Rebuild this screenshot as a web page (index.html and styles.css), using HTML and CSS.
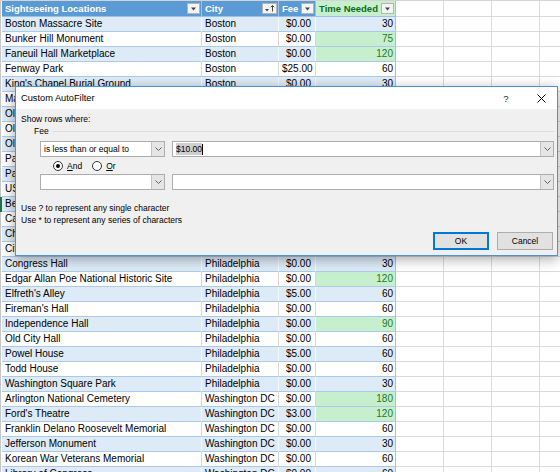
FILE: index.html
```html
<!DOCTYPE html>
<html lang="en">
<head>
    <meta charset="utf-8">
    <title>Custom AutoFilter</title>
    <link rel="stylesheet" href="styles.css">
</head>
<body>
    <div class="sheet">
        <div class="row hd">
            <span>Sightseeing Locations<b class="fbtn"><svg width="11" height="11" viewBox="0 0 11 11"><path d="M3 4.5h5l-2.5 3z" fill="#444"/></svg></b></span>
            <span>City<b class="fbtn"><svg width="13" height="11" viewBox="0 0 13 11"><path d="M2 6h4l-2 2.5z" fill="#444"/><path d="M9.5 2.5v6M7.8 4.2l1.7-1.7 1.7 1.7" stroke="#444" fill="none"/></svg></b></span>
            <span>Fee<b class="fbtn"><svg width="11" height="11" viewBox="0 0 11 11"><path d="M3 4.5h5l-2.5 3z" fill="#444"/></svg></b></span>
            <span class="tn">Time Needed<b class="fbtn"><svg width="11" height="11" viewBox="0 0 11 11"><path d="M3 4.5h5l-2.5 3z" fill="#444"/></svg></b></span>
            <i class="rest"></i>
        </div>
        <div class="row"><span>Boston Massacre Site</span><span>Boston</span><span class="n">$0.00</span><span class="t">30</span><i class="rest"></i></div>
        <div class="row"><span>Bunker Hill Monument</span><span>Boston</span><span class="n">$0.00</span><span class="t g">75</span><i class="rest"></i></div>
        <div class="row"><span>Faneuil Hall Marketplace</span><span>Boston</span><span class="n">$0.00</span><span class="t g">120</span><i class="rest"></i></div>
        <div class="row"><span>Fenway Park</span><span>Boston</span><span class="n">$25.00</span><span class="t">60</span><i class="rest"></i></div>
        <div class="row"><span>King's Chapel Burial Ground</span><span>Boston</span><span class="n">$0.00</span><span class="t">30</span><i class="rest"></i></div>
        <div class="row"><span>Massachusetts State House</span><span>Boston</span><span class="n">$0.00</span><span class="t">45</span><i class="rest"></i></div>
        <div class="row"><span>Old North Church</span><span>Boston</span><span class="n">$0.00</span><span class="t">30</span><i class="rest"></i></div>
        <div class="row"><span>Old South Meeting House</span><span>Boston</span><span class="n">$6.00</span><span class="t">30</span><i class="rest"></i></div>
        <div class="row"><span>Old State House</span><span>Boston</span><span class="n">$10.00</span><span class="t">45</span><i class="rest"></i></div>
        <div class="row"><span>Park Street Church</span><span>Boston</span><span class="n">$0.00</span><span class="t">15</span><i class="rest"></i></div>
        <div class="row"><span>Paul Revere House</span><span>Boston</span><span class="n">$3.50</span><span class="t">30</span><i class="rest"></i></div>
        <div class="row"><span>USS Constitution</span><span>Boston</span><span class="n">$0.00</span><span class="t">60</span><i class="rest"></i></div>
        <div class="row sel"><span>Betsy Ross House</span><span>Philadelphia</span><span class="n">$5.00</span><span class="t">30</span><i class="rest"></i></div>
        <div class="row"><span>Carpenters' Hall</span><span>Philadelphia</span><span class="n">$0.00</span><span class="t">30</span><i class="rest"></i></div>
        <div class="row"><span>Christ Church</span><span>Philadelphia</span><span class="n">$3.00</span><span class="t">30</span><i class="rest"></i></div>
        <div class="row"><span>City Tavern</span><span>Philadelphia</span><span class="n">$0.00</span><span class="t">60</span><i class="rest"></i></div>
        <div class="row"><span>Congress Hall</span><span>Philadelphia</span><span class="n">$0.00</span><span class="t">30</span><i class="rest"></i></div>
        <div class="row"><span>Edgar Allan Poe National Historic Site</span><span>Philadelphia</span><span class="n">$0.00</span><span class="t g">120</span><i class="rest"></i></div>
        <div class="row"><span>Elfreth's Alley</span><span>Philadelphia</span><span class="n">$5.00</span><span class="t">60</span><i class="rest"></i></div>
        <div class="row"><span>Fireman's Hall</span><span>Philadelphia</span><span class="n">$0.00</span><span class="t">60</span><i class="rest"></i></div>
        <div class="row"><span>Independence Hall</span><span>Philadelphia</span><span class="n">$0.00</span><span class="t g">90</span><i class="rest"></i></div>
        <div class="row"><span>Old City Hall</span><span>Philadelphia</span><span class="n">$0.00</span><span class="t">60</span><i class="rest"></i></div>
        <div class="row"><span>Powel House</span><span>Philadelphia</span><span class="n">$5.00</span><span class="t">60</span><i class="rest"></i></div>
        <div class="row"><span>Todd House</span><span>Philadelphia</span><span class="n">$0.00</span><span class="t">60</span><i class="rest"></i></div>
        <div class="row"><span>Washington Square Park</span><span>Philadelphia</span><span class="n">$0.00</span><span class="t">30</span><i class="rest"></i></div>
        <div class="row"><span>Arlington National Cemetery</span><span>Washington DC</span><span class="n">$0.00</span><span class="t g">180</span><i class="rest"></i></div>
        <div class="row"><span>Ford's Theatre</span><span>Washington DC</span><span class="n">$3.00</span><span class="t g">120</span><i class="rest"></i></div>
        <div class="row"><span>Franklin Delano Roosevelt Memorial</span><span>Washington DC</span><span class="n">$0.00</span><span class="t">60</span><i class="rest"></i></div>
        <div class="row"><span>Jefferson Monument</span><span>Washington DC</span><span class="n">$0.00</span><span class="t">30</span><i class="rest"></i></div>
        <div class="row"><span>Korean War Veterans Memorial</span><span>Washington DC</span><span class="n">$0.00</span><span class="t">60</span><i class="rest"></i></div>
        <div class="row"><span>Library of Congress</span><span>Washington DC</span><span class="n">$0.00</span><span class="t">60</span><i class="rest"></i></div>
    </div>

    <div class="dlg">
        <div class="dlg-title">
            <span class="caption">Custom AutoFilter</span>
            <span class="help">?</span>
            <span class="close"><svg width="9" height="9" viewBox="0 0 9 9"><path d="M0.5 0.5l8 8M8.5 0.5l-8 8" stroke="#000" stroke-width="1"/></svg></span>
        </div>
        <div class="dlg-body">
            <div class="line">Show rows where:</div>
            <div class="grp">Fee</div>
            <div class="crit">
                <div class="combo"><span class="val">is less than or equal to</span><span class="dd"><svg width="7" height="4" viewBox="0 0 7 4"><path d="M0.5 0.5l3 3 3-3" stroke="#606060" fill="none"/></svg></span></div>
                <div class="combo edit"><span class="val"><em class="hl">$10.00</em><i class="caret"></i></span><span class="dd"><svg width="7" height="4" viewBox="0 0 7 4"><path d="M0.5 0.5l3 3 3-3" stroke="#606060" fill="none"/></svg></span></div>
            </div>
            <div class="andor">
                <span class="radio on"></span><span class="rlbl"><u>A</u>nd</span>
                <span class="radio"></span><span class="rlbl"><u>O</u>r</span>
            </div>
            <div class="crit second">
                <div class="combo"><span class="val"></span><span class="dd"><svg width="7" height="4" viewBox="0 0 7 4"><path d="M0.5 0.5l3 3 3-3" stroke="#606060" fill="none"/></svg></span></div>
                <div class="combo edit"><span class="val"></span><span class="dd"><svg width="7" height="4" viewBox="0 0 7 4"><path d="M0.5 0.5l3 3 3-3" stroke="#606060" fill="none"/></svg></span></div>
            </div>
            <div class="hint">
                <div class="line">Use ? to represent any single character</div>
                <div class="line">Use * to represent any series of characters</div>
            </div>
            <div class="btns">
                <button class="btn ok">OK</button>
                <button class="btn">Cancel</button>
            </div>
        </div>
    </div>
</body>
</html>
```

FILE: styles.css
```css
* {
    margin: 0;
    padding: 0;
    box-sizing: border-box;
}
body {
    width: 560px;
    height: 472px;
    overflow: hidden;
    position: relative;
    background: #fff;
    font-family: "Liberation Sans", Arial, sans-serif;
}

/* sheet */
.sheet {
    border-top: 1px solid #d4d4d4;
}
.row {
    display: grid;
    grid-template-columns: 200px 77px 37px 80px 1fr;
    height: 15px;
    border-left: 1px solid #c6c6c6;
    padding-left: 1px;
    font-size: 10px;
    line-height: 14px;
}
.row > span {
    border-bottom: 1px solid #acc9e8;
    border-right: 1px solid #d8d8d8;
    padding: 0 3px;
    white-space: nowrap;
    overflow: hidden;
    color: #000;
}
.row:nth-child(even) > span {
    background: #ddebf7;
    border-right-color: #f4f8fc;
}
.row > span.n {
    text-align: right;
    padding-right: 4px;
}
.row > span.t {
    text-align: right;
    padding-right: 2px;
    border-right-color: #9bc2e6;
}
.row > span.g {
    background: #c6efce;
    color: #1d7a26;
}
.row:nth-child(even) > span.g {
    background: #c6efce;
}
.row.sel {
    border-left: 2px solid #217346;
    padding-left: 0;
}
.rest {
    border-bottom: 1px solid #dadada;
    background: repeating-linear-gradient(to right, transparent 0 47px, #dadada 47px 48px);
}

/* header */
.row.hd {
    height: 16px;
}
.row.hd > span {
    display: flex;
    align-items: center;
    justify-content: space-between;
    background: #5b9bd5;
    color: #fff;
    font-weight: bold;
    font-size: 9.5px;
    padding: 0 1px 0 3px;
    border-bottom: 1px solid #9bc2e6;
    border-right: 1px solid #9bc2e6;
}
.row.hd > span.tn {
    background: #c6efce;
    color: #0f6b1a;
}
.fbtn {
    display: flex;
    align-items: center;
    justify-content: center;
    height: 11px;
    min-width: 11px;
    background: #f4f4f4;
    border: 1px solid #b4b4b4;
}
.fbtn svg {
    display: block;
}

/* dialog */
.dlg {
    position: absolute;
    left: 15px;
    top: 86px;
    width: 543px;
    height: 170px;
    border: 1px solid #4a93d6;
    background: #f0f0f0;
    box-shadow: 0 3px 12px rgba(0, 0, 0, 0.35);
    font-size: 8.5px;
    color: #000;
}
.dlg-title {
    display: flex;
    align-items: center;
    height: 22px;
    background: #fff;
    padding-left: 5px;
}
.caption {
    font-size: 9.25px;
    flex: 1;
}
.help {
    width: 20px;
    text-align: center;
    font-size: 9.5px;
    color: #222;
}
.close {
    display: flex;
    justify-content: center;
    width: 30px;
    margin: 0 1px 0 10px;
}
.dlg-body {
    padding: 4px 3px 4px 5px;
}
.line {
    line-height: 12px;
    height: 12px;
    white-space: nowrap;
}
.grp {
    display: flex;
    align-items: center;
    height: 12px;
    margin-left: 13px;
}
.grp::after {
    content: "";
    flex: 1;
    height: 1px;
    background: #dcdcdc;
    margin-left: 4px;
}
.crit {
    display: flex;
    gap: 7px;
    margin: 4px 0 0 19px;
}
.crit.second {
    margin-top: 0;
}
.combo {
    display: flex;
    width: 125px;
    height: 16px;
    background: #fff;
    border: 1px solid #adadad;
}
.combo.edit {
    flex: 1;
}
.combo .val {
    flex: 1;
    display: flex;
    align-items: center;
    padding-left: 3px;
    white-space: nowrap;
}
.combo .dd {
    width: 13px;
    display: flex;
    align-items: center;
    justify-content: center;
    background: #e5e5e5;
    border-left: 1px solid #c4c4c4;
}
.hl {
    font-style: normal;
    background: #cfcfcf;
    padding: 1px 0;
}
.caret {
    display: block;
    width: 1px;
    height: 11px;
    background: #000;
}
.andor {
    display: flex;
    align-items: center;
    height: 17px;
    padding-left: 32px;
}
.radio {
    width: 10px;
    height: 10px;
    border: 1px solid #333;
    border-radius: 50%;
    background: #fff;
    display: flex;
    align-items: center;
    justify-content: center;
}
.radio.on::after {
    content: "";
    width: 4px;
    height: 4px;
    border-radius: 50%;
    background: #000;
}
.rlbl {
    margin: 0 10px 0 4px;
}
.hint {
    margin-top: 12px;
}
.btns {
    display: flex;
    justify-content: flex-end;
    gap: 8px;
    margin: 6px 1px 0 0;
}
.btn {
    width: 56px;
    height: 18px;
    font: 8.5px "Liberation Sans", Arial, sans-serif;
    color: #000;
    background: #e1e1e1;
    border: 1px solid #adadad;
}
.btn.ok {
    border-color: #0078d7;
    box-shadow: inset 0 0 0 1px #0078d7;
}
```
